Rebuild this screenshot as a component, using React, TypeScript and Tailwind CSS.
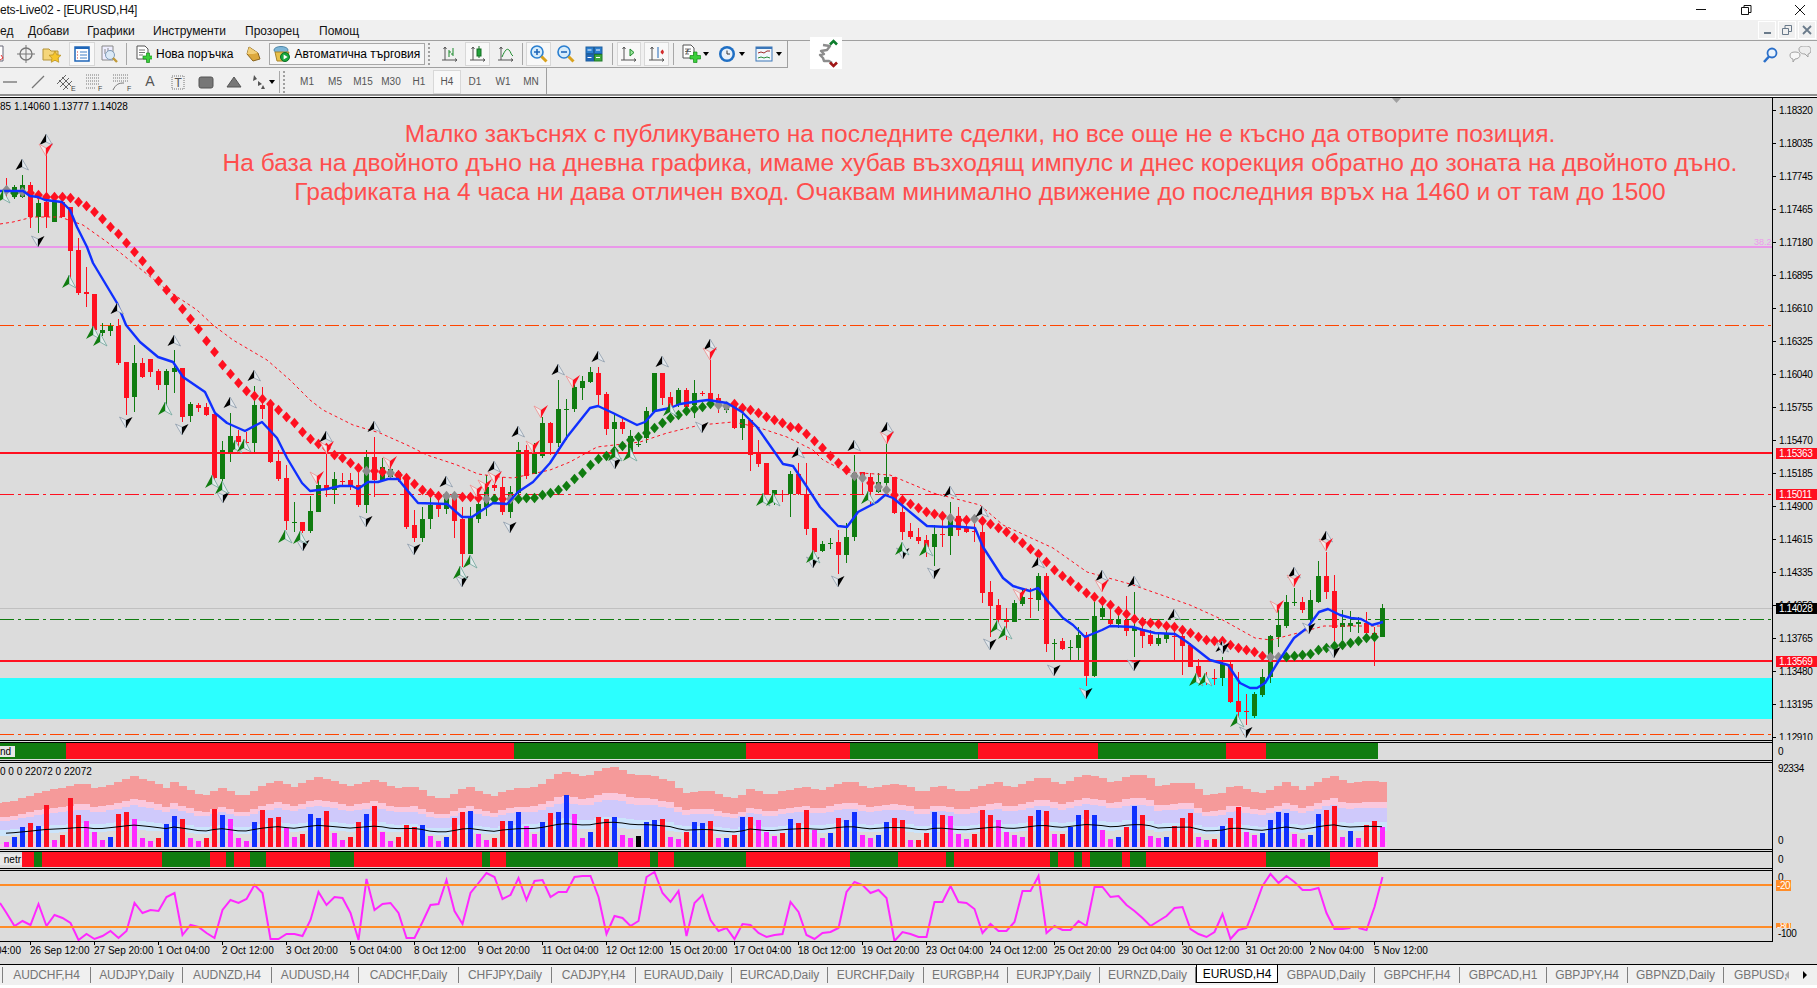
import type { ReactNode } from "react";

const r = 0;
const g = 1;
// top of body, bottom of body, high, low, direction - all in page pixels
const CANDLES: number[][] = [
  [188,192,178,198,r],[187,197,185,199,g],[185,197,175,198,g],[185,217,182,228,r],[203,217,200,233,g],
  [202,217,155,228,r],[202,222,197,222,g],[202,217,197,217,r],[207,251,207,282,r],[250,293,238,295,r],
  [292,294,267,307,r],[294,330,294,335,r],[330,333,323,336,g],[326,331,323,336,g],[326,363,319,365,r],
  [362,398,362,415,r],[363,397,345,412,g],[363,377,358,378,r],[359,372,359,377,r],[371,385,369,390,r],
  [371,385,369,407,g],[368,372,350,393,g],[368,417,368,422,r],[404,416,402,422,g],[405,408,403,412,r],
  [407,415,403,416,r],[414,478,414,480,r],[450,479,441,483,g],[436,452,413,462,g],[436,442,430,450,r],
  [442,443,432,450,r],[405,443,386,452,g],[405,409,387,419,r],[403,462,403,463,r],[461,479,450,481,r],
  [478,521,465,530,r],[522,522,502,532,g],[522,531,522,533,r],[511,531,496,533,g],[485,512,475,512,g],
  [485,490,445,497,r],[479,490,472,504,g],[481,481,473,485,r],[480,487,473,490,r],[485,505,473,507,r],
  [457,505,450,513,g],[457,480,437,497,r],[467,480,458,480,g],[469,477,462,480,g],[472,480,470,482,r],
  [480,527,478,529,r],[525,538,510,542,r],[519,538,507,542,g],[505,519,493,529,g],[505,509,493,517,r],
  [497,509,492,514,g],[498,521,495,538,r],[519,554,507,567,r],[517,554,507,554,g],[504,519,494,523,g],
  [487,507,475,516,g],[485,488,475,491,r],[487,512,477,515,r],[492,512,486,518,g],[450,493,442,503,g],
  [450,476,445,479,r],[453,474,443,474,g],[423,456,417,458,g],[423,443,422,455,r],[409,443,380,447,g],
  [409,409,399,440,g],[387,409,380,412,g],[381,388,376,400,g],[372,382,367,383,g],[373,395,367,405,r],
  [394,429,392,435,r],[422,429,413,455,g],[422,429,419,434,r],[436,452,430,452,g],[444,444,437,447,g],
  [411,438,407,443,g],[373,412,373,413,g],[373,398,373,405,r],[397,407,392,410,r],[390,405,388,407,g],
  [390,407,388,412,r],[393,405,380,418,g],[393,393,391,396,r],[393,400,360,401,r],[398,405,394,413,r],
  [405,410,402,413,g],[402,428,402,429,r],[419,428,414,440,g],[420,455,420,471,r],[453,464,440,467,r],
  [463,495,463,495,r],[490,495,490,505,g],[494,494,490,502,r],[474,494,471,517,g],[474,494,463,495,r],
  [494,529,463,535,r],[528,552,528,556,r],[544,551,541,552,g],[543,543,538,549,g],[542,555,530,574,r],
  [537,555,523,563,g],[473,537,455,541,g],[472,477,472,495,r],[477,492,473,505,r],[482,492,473,493,g],
  [477,483,440,493,g],[477,513,477,514,r],[512,532,500,540,r],[531,537,523,539,r],[537,541,528,544,r],
  [540,547,535,557,r],[534,547,525,566,g],[534,534,518,547,r],[518,536,502,555,g],[516,530,507,536,r],
  [528,532,517,533,r],[531,531,517,542,r],[532,593,518,603,r],[592,606,581,637,r],[605,620,599,630,r],
  [620,622,608,640,r],[603,622,600,622,g],[597,604,590,606,g],[598,598,588,618,r],[576,600,573,611,g],
  [576,644,573,652,r],[643,643,639,662,g],[641,649,638,650,r],[647,647,640,660,g],[635,648,627,660,g],
  [635,676,632,686,r],[616,676,602,677,g],[608,617,597,620,g],[620,624,610,625,r],[619,624,615,628,g],
  [620,631,596,636,r],[627,631,592,657,g],[630,636,623,648,r],[635,644,630,646,r],[638,644,633,646,g],
  [634,639,630,643,g],[636,636,623,660,r],[636,646,627,675,r],[645,667,643,667,r],[666,677,659,683,r],
  [680,680,672,685,r],[678,678,669,685,r],[664,678,657,686,g],[664,702,660,703,r],[701,712,672,720,r],
  [711,711,694,725,r],[694,716,692,718,g],[677,695,669,697,g],[636,677,635,683,g],[625,637,610,647,g],
  [602,626,595,628,g],[602,602,588,606,g],[602,610,597,613,r],[600,619,590,622,g],[576,602,561,603,g],
  [576,592,552,599,r],[591,628,575,643,r],[623,627,610,640,g],[623,626,611,632,g],[622,624,617,633,g],
  [623,633,612,637,r],[633,637,627,666,r],[608,637,604,637,g],
];

const DIAMONDS = [190,193,192,193,195,197,197,197,198,202,206,212,219,227,234,243,252,261,271,281,290,299,309,319,329,341,352,365,374,383,391,396,399,404,410,417,423,432,439,444,448,455,458,463,468,471,471,472,473,475,478,484,490,493,496,496,496,497,497,498,499,499,499,499,499,498,498,495,493,490,486,479,473,465,459,456,451,446,440,437,433,428,423,418,415,411,409,407,404,405,406,404,408,410,413,417,420,423,427,428,434,441,448,456,463,470,476,478,483,487,490,495,500,504,508,512,514,516,518,520,520,519,521,524,528,532,538,543,549,554,562,570,576,581,587,593,597,601,605,611,614,619,622,623,624,626,627,630,633,637,640,641,641,645,648,650,652,656,657,657,657,656,655,654,650,648,646,645,643,641,638,637];
const GREY = [0,2,45,48,55,56,60,63,89,90,106,107,109,110,118,121,158,159];

const BLUE = "0,191 23,191 30,196 38,197 45,200 62,202 70,210 77,227 87,247 93,263 105,283 117,303 126,325 140,342 158,357 173,362 183,377 205,392 215,413 227,423 245,431 262,422 277,438 287,458 302,483 310,491 327,489 340,486 352,486 358,489 368,482 378,482 388,479 398,479 407,490 418,503 447,504 462,517 472,517 493,503 507,504 518,492 533,482 550,463 567,437 590,408 598,406 613,413 637,425 645,422 655,411 670,408 680,404 700,401 708,400 727,403 742,412 757,427 783,464 793,466 807,487 820,507 838,526 847,527 858,512 877,502 885,495 893,498 927,526 947,527 950,526 975,528 983,547 1003,578 1013,586 1030,591 1038,588 1047,600 1063,618 1073,625 1085,637 1102,630 1110,626 1133,627 1143,630 1155,633 1175,634 1187,642 1210,660 1228,665 1240,683 1250,688 1257,688 1265,683 1278,662 1294,638 1307,628 1319,612 1328,609 1340,615 1351,618 1361,619 1372,625 1383,622";
const RED_MA = "0,224 13,222 33,217 60,217 83,225 107,242 133,263 167,290 197,310 213,325 233,340 267,360 290,380 310,400 323,410 353,425 380,433 407,445 427,455 457,465 478,474 500,477 513,478 550,470 570,462 597,447 640,442 667,433 700,425 733,422 757,427 787,437 813,450 823,460 847,472 890,475 933,493 980,505 1003,525 1053,548 1087,572 1130,584 1190,605 1221,619 1255,638 1271,640 1294,634 1324,626 1382,626";

const ARROW_UP: number[][] = [[22,165],[46,140],[117,309],[174,341],[254,376],[230,403],[326,437],[374,427],[446,482],[494,467],[518,432],[558,370],[598,357],[662,362],[710,345],[798,453],[854,446],[887,428],[950,492],[982,512],[1038,563],[1102,576],[1134,582],[1174,615],[1222,647],[1326,537],[1294,573]];
const ARROW_DOWN: number[][] = [[38,241],[126,422],[182,429],[223,497],[303,545],[366,521],[414,549],[462,581],[510,527],[615,463],[702,427],[813,562],[838,581],[903,553],[934,573],[990,644],[1054,670],[1086,693],[1134,665],[1246,732],[1309,628],[1334,652],[1223,648]];
const ARROW_RED: number[][] = [[46,149],[327,447],[317,477],[390,462],[477,490],[485,485],[495,477],[533,446],[541,411],[573,381],[710,353],[887,437],[1020,594],[1102,585],[1326,544],[1294,580],[1277,606]];
const ARROW_GREEN: number[][] = [[3,197],[69,282],[93,333],[100,340],[165,409],[212,482],[222,488],[235,447],[244,446],[285,537],[300,538],[460,573],[470,562],[615,455],[630,455],[670,410],[763,500],[773,500],[868,498],[813,557],[902,549],[926,550],[997,627],[1005,633],[1196,680],[1205,680],[1237,721]];

const RED = "#ff1020";
const GREEN = "#107c10";
const BLUE_C = "#1030ff";
const PINK = "#ff28ff";

const VOL_TOPS: number[][] = [[0,803],[10,802],[33,795],[43,791],[67,787],[83,783],[97,789],[115,783],[133,776],[147,780],[167,788],[173,782],[193,791],[203,797],[220,787],[243,797],[260,787],[277,781],[293,787],[317,777],[333,781],[350,786],[377,779],[393,788],[417,787],[433,798],[447,798],[467,786],[493,797],[500,793],[517,788],[537,787],[553,777],[563,771],[587,777],[603,768],[617,767],[633,775],[650,775],[673,782],[682,793],[707,790],[727,797],[737,799],[750,789],[770,795],[787,790],[807,787],[820,791],[843,782],[857,782],[867,789],[890,784],[907,785],[923,793],[937,785],[963,792],[980,787],[997,782],[1010,788],[1027,783],[1035,778],[1050,778],[1058,785],[1077,778],[1083,774],[1100,777],[1113,783],[1130,775],[1147,775],[1157,786],[1177,783],[1193,783],[1203,795],[1220,794],[1233,785],[1250,790],[1260,794],[1287,782],[1303,790],[1323,779],[1333,775],[1347,783],[1370,780],[1386,782]];

const p = PINK, e = RED, b = BLUE_C, k = "#000000";
const VOLUME: [string, number][] = [
  [p,842],[b,837],[b,827],[e,823],[b,826],[e,805],[p,840],[e,835],[e,798],[e,815],[p,821],[p,832],[p,840],[b,837],[e,814],[e,812],[p,819],[p,838],[p,841],[e,838],
  [b,824],[b,816],[e,819],[p,838],[p,841],[e,838],[e,809],[b,815],[p,819],[p,838],[p,841],[b,822],[e,810],[e,818],[e,817],[p,828],[p,837],[e,834],[b,814],[b,818],
  [e,811],[p,833],[p,840],[e,837],[e,822],[b,814],[e,806],[p,832],[p,841],[e,837],[e,825],[e,827],[b,825],[p,836],[p,841],[b,837],[e,818],[e,812],[b,811],[p,834],
  [p,840],[e,838],[e,821],[b,821],[b,812],[p,826],[p,834],[b,822],[e,813],[b,812],[b,795],[p,814],[p,838],[b,832],[e,817],[e,819],[b,817],[p,835],[p,838],[k,836],
  [b,822],[b,820],[e,819],[p,837],[p,839],[e,832],[b,822],[b,823],[e,821],[p,838],[b,838],[e,835],[b,817],[e,817],[p,820],[p,832],[p,836],[e,833],[b,819],[e,823],
  [e,810],[p,830],[p,838],[b,833],[e,818],[b,820],[b,812],[p,835],[p,838],[b,835],[b,822],[e,818],[e,820],[p,840],[e,840],[e,833],[b,812],[e,815],[p,816],[p,834],
  [p,839],[e,834],[e,810],[e,815],[p,820],[p,832],[p,835],[p,837],[e,816],[b,810],[e,811],[p,834],[e,834],[b,827],[b,815],[e,810],[b,815],[p,830],[p,839],[b,837],
  [e,827],[b,806],[e,815],[p,836],[p,838],[b,837],[e,826],[e,818],[e,813],[p,837],[p,840],[e,839],[b,826],[e,818],[e,807],[p,832],[p,835],[b,833],[b,820],[b,812],
  [b,813],[p,834],[p,839],[b,835],[b,814],[e,810],[e,806],[p,837],[b,831],[p,838],[e,825],[e,821],[p,827],
];

const WPR = [913,926,921,925,904,926,915,918,923,940,934,939,936,931,938,931,903,913,910,911,897,893,935,925,927,933,938,910,900,903,899,885,893,939,939,934,934,936,920,892,905,897,898,913,940,879,910,904,903,913,938,938,922,905,904,880,911,924,893,883,873,877,
  899,895,878,900,881,880,897,892,892,877,876,876,897,934,916,918,926,921,877,872,893,902,891,936,903,895,920,931,928,939,924,925,933,937,935,934,902,912,935,939,933,932,928,892,882,885,893,890,898,941,932,934,937,937,902,902,886,902,903,909,933,924,931,
  931,922,891,891,876,933,926,930,930,921,926,887,887,897,896,905,911,918,926,921,916,908,907,929,934,937,932,914,939,930,928,908,886,874,883,876,882,890,890,888,913,929,929,928,928,930,907,877];

const BAND_1: [number, number, string][] = [[-1,66,GREEN],[66,514,RED],[514,746,GREEN],[746,850,RED],[850,978,GREEN],[978,1098,RED],[1098,1226,GREEN],[1226,1266,RED],[1266,1378,GREEN]];
const BAND_2: [number, number, string][] = [[22,34,RED],[34,42,GREEN],[42,162,RED],[162,210,GREEN],[210,226,RED],[226,234,GREEN],[234,250,RED],[250,266,GREEN],[266,330,RED],[330,354,GREEN],[354,482,RED],[482,490,GREEN],[490,506,RED],[506,618,GREEN],[618,650,RED],[650,658,GREEN],[658,674,RED],[674,746,GREEN],[746,850,RED],[850,898,GREEN],[898,946,RED],[946,954,GREEN],[954,1050,RED],[1050,1058,GREEN],[1058,1074,RED],[1074,1082,GREEN],[1082,1090,RED],[1090,1122,GREEN],[1122,1130,RED],[1130,1146,GREEN],[1146,1266,RED],[1266,1330,GREEN],[1330,1378,RED]];

const PRICES = ["1.18320","1.18035","1.17745","1.17465","1.17180","1.16895","1.16610","1.16325","1.16040","1.15755","1.15470","1.15185","1.14900","1.14615","1.14335","1.14050","1.13765","1.13480","1.13195","1.12910"];
const DATES = ["26 Sep 12:00","27 Sep 20:00","1 Oct 04:00","2 Oct 12:00","3 Oct 20:00","5 Oct 04:00","8 Oct 12:00","9 Oct 20:00","11 Oct 04:00","12 Oct 12:00","15 Oct 20:00","17 Oct 04:00","18 Oct 12:00","19 Oct 20:00","23 Oct 04:00","24 Oct 12:00","25 Oct 20:00","29 Oct 04:00","30 Oct 12:00","31 Oct 20:00","2 Nov 04:00","5 Nov 12:00"];

function volTop(x: number) {
  for (let n = 1; n < VOL_TOPS.length; n++) {
    const [x0, y0] = VOL_TOPS[n - 1];
    const [x1, y1] = VOL_TOPS[n];
    if (x <= x1) return y0 + ((y1 - y0) * (x - x0)) / (x1 - x0);
  }
  return 782;
}

function MainChart() {
  return (
    <svg width="1772" height="642" viewBox="0 98 1772 642" className="block">
      <rect x="0" y="678" width="1772" height="41" fill="#2bffff" />
      <line x1="0" x2="1772" y1="608.5" y2="608.5" stroke="#c0c0c0" />
      <line x1="0" x2="1772" y1="247" y2="247" stroke="#ee82ee" strokeWidth="1.5" />
      <line x1="0" x2="1772" y1="325.5" y2="325.5" stroke="#ff4500" strokeDasharray="14 4 3 4" />
      <line x1="0" x2="1772" y1="734.5" y2="734.5" stroke="#ff4500" strokeDasharray="14 4 3 4" />
      <line x1="0" x2="1772" y1="619.5" y2="619.5" stroke={GREEN} strokeDasharray="14 4 3 4" />
      {CANDLES.map(([top, bot, hi, lo, dir], i) => {
        const c = dir === g ? GREEN : RED;
        return (
          <g key={i} fill={c} shapeRendering="crispEdges">
            <rect x={8 * i + 6} y={hi} width="1" height={lo - hi} />
            <rect x={8 * i + 4} y={top} width="5" height={Math.max(bot - top, 1)} />
          </g>
        );
      })}
      <line x1="0" x2="1772" y1="453" y2="453" stroke={RED} strokeWidth="2" />
      <line x1="0" x2="1772" y1="494.5" y2="494.5" stroke={RED} strokeDasharray="14 4 3 4" />
      <line x1="0" x2="1772" y1="661" y2="661" stroke={RED} strokeWidth="2" />
      <polyline points={RED_MA} fill="none" stroke={RED} strokeWidth="1" strokeDasharray="3 3" />
      {DIAMONDS.map((y, i) => {
        const x = 8 * i + 6.5;
        const green = i === 1 || i === 61 || (i >= 64 && i <= 88) || i >= 160;
        const fill = GREY.includes(i) ? "#8c8c8c" : green ? GREEN : RED;
        return <path key={i} d={`M${x} ${y - 5.2}L${x + 4.4} ${y}L${x} ${y + 5.2}L${x - 4.4} ${y}Z`} fill={fill} />;
      })}
      <polyline points={BLUE} fill="none" stroke={BLUE_C} strokeWidth="2.4" strokeLinejoin="round" />
      {ARROW_UP.map(([x, y], i) => (
        <g key={i} transform={`translate(${x} ${y})`}>
          <path d="M0 -6L6.5 5L0 2Z" fill="#e4e8ec" stroke="#8d9cab" strokeWidth="0.8" />
          <path d="M0 -6L-6.5 5L0 2Z" fill="#000" />
        </g>
      ))}
      {ARROW_DOWN.map(([x, y], i) => (
        <g key={i} transform={`translate(${x} ${y})`}>
          <path d="M0 6L-6.5 -5L0 -2Z" fill="#e4e8ec" stroke="#8d9cab" strokeWidth="0.8" />
          <path d="M0 6L6.5 -5L0 -2Z" fill="#000" />
        </g>
      ))}
      {ARROW_RED.map(([x, y], i) => (
        <g key={i} transform={`translate(${x} ${y})`}>
          <path d="M0 7L-7 -5L0 -1Z" fill="#eee" stroke="#f08a8a" strokeWidth="0.8" />
          <path d="M0 7L7 -6L0 -1Z" fill={RED} />
        </g>
      ))}
      {ARROW_GREEN.map(([x, y], i) => (
        <g key={i} transform={`translate(${x} ${y})`}>
          <path d="M0 -7L7 6L0 2Z" fill="#e4ecec" stroke="#6fa59a" strokeWidth="0.8" />
          <path d="M0 -7L-7 6L0 2Z" fill={GREEN} />
        </g>
      ))}
      <path d="M1392 98h9l-4.5 5z" fill="#a0a0a0" />
    </svg>
  );
}

function VolumePanel() {
  const bins = Array.from({ length: 174 }, (_, n) => n - 1);
  return (
    <svg width="1772" height="86" viewBox="0 763 1772 86" className="block" shapeRendering="crispEdges">
      {bins.map((i) => {
        const x = 8 * i + 2;
        const h = 847 - volTop(Math.max(8 * i + 6, 0));
        const seg = (a: number, c: number, fill: string) => (
          <rect x={x} y={847 - a * h} width="8.5" height={(a - c) * h} fill={fill} />
        );
        return (
          <g key={i}>
            {seg(1, 0.68, "#f59a9a")}
            {seg(0.68, 0.59, "#fbc8dc")}
            {seg(0.59, 0.38, "#cfc9fb")}
            {seg(0.38, 0.25, "#cbe4fb")}
            {seg(0.07, 0, "#f6c9ee")}
          </g>
        );
      })}
      {VOLUME.map(([c, y], i) => (
        <rect key={i} x={8 * i + 4} y={y} width="5" height={847 - y} fill={c} />
      ))}
      <polyline
        shapeRendering="auto"
        points={bins.slice(1).map((i) => `${8 * i + 6},${847 - 0.31 * (847 - volTop(8 * i + 6))}`).join(" ")}
        fill="none"
        stroke="#000"
      />
    </svg>
  );
}

function Band({ items, height }: { items: [number, number, string][]; height: number }) {
  return (
    <svg width="1772" height={height} className="block" shapeRendering="crispEdges">
      {items.map(([a, z, c]) => (
        <rect key={a} x={a} y="0" width={z - a} height={height - 1} fill={c} />
      ))}
    </svg>
  );
}

function WprPanel() {
  const pts = (from: number, to: number) =>
    WPR.slice(from, to).map((y, i) => `${8 * (i + from) + 6.5},${y}`).join(" ");
  return (
    <svg width="1772" height="70" viewBox="0 871 1772 70" className="block">
      <polyline points={`0,903 ${pts(0, 169)}`} fill="none" stroke={PINK} strokeWidth="2" />
      <polyline points={pts(169, 173)} fill="none" stroke={PINK} strokeWidth="2" />
      <line x1="0" x2="1772" y1="885" y2="885" stroke="#ff8c28" strokeWidth="2" />
      <line x1="0" x2="1772" y1="927" y2="927" stroke="#ff8c28" strokeWidth="2" />
    </svg>
  );
}

function Sep() {
  return <div className="h-[3px] border-y border-black bg-[#dcdcdc]" />;
}

function Logo() {
  return (
    <svg width="32" height="32" viewBox="0 0 32 32" className="absolute left-[810px] top-[37px] z-10 bg-white">
      <path d="M13 8l7 1-3 4-6 1 3 3-4 1 3 3 1 3h5l3 2" fill="none" stroke="#8c8c8c" strokeWidth="2.4" strokeLinejoin="round" />
      <path d="M20 7.5L23.5 4 27 7.5" fill="none" stroke="#0e7d2c" strokeWidth="2.6" />
      <path d="M20 25.5L23.5 29 27 25.5" fill="none" stroke="#a01616" strokeWidth="2.6" />
    </svg>
  );
}

function Svg({ children, w = 20 }: { children: ReactNode; w?: number }) {
  return (
    <svg width={w} height="20" viewBox={`0 0 ${w} 20`} className="shrink-0">
      {children}
    </svg>
  );
}

function Doc() {
  return (
    <>
      <path d="M3 2h8l3 3v10H3z" fill="#fff" stroke="#555" />
      <path d="M5 6h6M5 8.5h6M5 11h4" stroke="#777" />
    </>
  );
}

const Plus = () => <path d="M12.5 9h3v3h3.5v3h-3.5v3.5h-3V15H9v-3h3.5z" fill="#3bcf3b" stroke="#15891a" strokeWidth="0.7" />;

const Glass = ({ inner }: { inner: ReactNode }) => (
  <>
    <circle cx="8" cy="8" r="6" fill="#d6ecfb" stroke="#2a7fd0" strokeWidth="1.6" />
    {inner}
    <path d="M12.5 12.5l5 5" stroke="#d9a21e" strokeWidth="3" />
  </>
);

const AxisIcon = ({ children }: { children?: ReactNode }) => (
  <>
    <path d="M5 3v13M2 16h15M5 3l-1.5 2M5 3l1.5 2M17 16l-2-1.5M17 16l-2 1.5" stroke="#555" fill="none" />
    {children}
  </>
);

function Toolbar1() {
  const box = "flex items-center justify-center h-[24px] border border-[#d8d8d8] bg-[#f8f8f8] shrink-0";
  const btn = "flex items-center justify-center h-[24px] shrink-0";
  const sep = "w-px h-[22px] bg-[#a8a8a8] shrink-0";
  return (
    <div className="h-[27px] flex bg-[#f0f0f0]">
      <div className="w-[788px] shrink-0 flex items-center border-r border-b border-[#a0a0a0] overflow-hidden">
        <div className="w-[13px] h-[24px] overflow-hidden flex justify-start items-center shrink-0">
          <svg width="5" height="20" viewBox="12 0 5 20"><path d="M3 2h12v15H3z" fill="#fff" stroke="#667" /><path d="M13 11l2 3-3 2" stroke="#e33" fill="none" /></svg>
        </div>
        <div className={`${btn} w-[25px]`}>
          <Svg><circle cx="10" cy="10" r="6" fill="none" stroke="#777" strokeWidth="1.3" /><path d="M10 1v18M1 10h18" stroke="#777" /></Svg>
        </div>
        <div className={`${btn} w-[28px]`}>
          <Svg>
            <path d="M1 5h6l2 2h7v9H1z" fill="#f5d67a" stroke="#b49338" />
            <path d="M13 7l1.8 3.8 4.2.5-3 2.9.8 4.1-3.8-2-3.8 2 .8-4.1-3-2.9 4.2-.5z" fill="#f6c52c" stroke="#b48c1c" strokeWidth="0.7" />
          </Svg>
        </div>
        <div className={`${box} w-[26px] ml-[3px]`}>
          <Svg>
            <rect x="3" y="3" width="14" height="14" fill="#fff" stroke="#1f66b8" strokeWidth="1.5" />
            <path d="M3 4h14" stroke="#1f66b8" strokeWidth="2" />
            <path d="M8 8h7M8 11h7M8 14h7" stroke="#3c7fc6" />
            <path d="M5 8h1M5 11h1M5 14h1" stroke="#d13a3a" />
          </Svg>
        </div>
        <div className={`${btn} w-[24px] ml-[2px]`}>
          <Svg>
            <path d="M3 2h11v14H3z" fill="#eef" stroke="#888" />
            <path d="M6 5v5M9 4v4M12 6v4" stroke="#888" />
            <circle cx="11" cy="11" r="4.5" fill="#dbe9f6" stroke="#7f9bb8" />
            <path d="M14 14l4 4" stroke="#c09a3a" strokeWidth="2.4" />
          </Svg>
        </div>
        <div className={`${sep} ml-[5px]`} />
        <div className="flex items-center ml-[9px] gap-[4px] shrink-0">
          <Svg w={16}><g transform="translate(-2 0)"><Doc /><Plus /></g></Svg>
          <span className="text-[12px] leading-none text-black whitespace-nowrap">Нова поръчка</span>
        </div>
        <div className={`${btn} w-[18px] ml-[11px]`}>
          <Svg w={18}>
            <path d="M5 3l9 6 2 6-7 2-6-7z" fill="#dca83c" stroke="#8a6520" />
            <path d="M5 3l9 6-5 1-6 0z" fill="#f2cf78" />
          </Svg>
        </div>
        <div className="flex items-center w-[156px] h-[22px] ml-[7px] pl-[3px] gap-[3px] border border-[#a8a8a8] bg-[#f6f6f6] shrink-0">
          <Svg w={18}>
            <ellipse cx="8" cy="6" rx="7" ry="3.5" fill="#7db6d8" stroke="#4d86a8" />
            <path d="M2 8l2 9h9l3-9z" fill="#e9c24c" stroke="#a8842a" />
            <circle cx="12" cy="13" r="4.5" fill="#18a83e" stroke="#0c6e28" />
            <path d="M10.6 10.5l4 2.5-4 2.5z" fill="#fff" />
          </Svg>
          <span className="text-[12px] leading-none text-black whitespace-nowrap">Автоматична търговия</span>
        </div>
        <div className="w-[3px] h-[22px] ml-[3px] border-l-2 border-dotted border-[#a0a0a0] shrink-0" />
        <div className={`${btn} w-[24px] ml-[7px]`}>
          <Svg><AxisIcon><path d="M9 6v7M9 8h2M13 4v8M11 10h2" stroke="#1a8a2a" /></AxisIcon></Svg>
        </div>
        <div className={`${box} w-[25px] ml-[3px]`}>
          <Svg><AxisIcon><rect x="9" y="5" width="4" height="7" fill="#22a33a" stroke="#126d22" /><path d="M11 2v3M11 12v2" stroke="#126d22" /></AxisIcon></Svg>
        </div>
        <div className={`${btn} w-[24px] ml-[4px]`}>
          <Svg><AxisIcon><path d="M6 13c3-7 5-9 7-7s2 5 4 6" fill="none" stroke="#1a8a2a" /></AxisIcon></Svg>
        </div>
        <div className={`${sep} ml-[4px]`} />
        <div className={`${box} w-[25px] ml-[3px]`}>
          <Svg><Glass inner={<path d="M5 8h6M8 5v6" stroke="#1f66b8" strokeWidth="1.6" />} /></Svg>
        </div>
        <div className={`${btn} w-[24px] ml-[3px]`}>
          <Svg><Glass inner={<path d="M5 8h6" stroke="#1f66b8" strokeWidth="1.6" />} /></Svg>
        </div>
        <div className={`${btn} w-[24px] ml-[4px]`}>
          <Svg>
            <rect x="2" y="3" width="7.5" height="6.5" fill="#2a7fd0" stroke="#1f5f9e" />
            <rect x="10.5" y="3" width="7.5" height="6.5" fill="#2a7fd0" stroke="#1f5f9e" />
            <rect x="2" y="10.5" width="7.5" height="6.5" fill="#1f66b8" stroke="#1f5f9e" />
            <rect x="10.5" y="10.5" width="7.5" height="6.5" fill="#41a83e" stroke="#1f7a2a" />
            <path d="M3.5 6h4M12 6h4M3.5 13.5h4M12 13.5h4" stroke="#fff" />
          </Svg>
        </div>
        <div className={`${sep} ml-[6px]`} />
        <div className={`${box} w-[24px] ml-[4px]`}>
          <Svg><AxisIcon><path d="M11 5v7l4-3.5z" fill="#9be59b" stroke="#1a8a2a" /></AxisIcon></Svg>
        </div>
        <div className={`${box} w-[25px] ml-[3px]`}>
          <Svg><AxisIcon><path d="M11 3v11" stroke="#1f66b8" /><path d="M17 8h-3M14 8l2-2M14 8l2 2" stroke="#d12a2a" strokeWidth="1.4" /></AxisIcon></Svg>
        </div>
        <div className={`${sep} ml-[4px]`} />
        <div className={`${btn} w-[22px] ml-[6px]`}>
          <Svg><g transform="translate(-1 -1)"><Doc /><text x="6" y="11" fontSize="8" fontStyle="italic" fill="#333">f</text><path d="M13.5 9h3.5v3.5h3.5v3.5H17v3.5h-3.5V16H10v-3.5h3.5z" fill="#3bcf3b" stroke="#15891a" strokeWidth="0.7" /></g></Svg>
        </div>
        <Caret />
        <div className={`${btn} w-[22px] ml-[6px]`}>
          <Svg>
            <circle cx="10" cy="10" r="8" fill="#1f6fc4" />
            <circle cx="10" cy="10" r="5.5" fill="#e8f1fa" />
            <path d="M10 6.5V10h3" stroke="#333" fill="none" />
          </Svg>
        </div>
        <Caret />
        <div className={`${btn} w-[22px] ml-[7px]`}>
          <Svg>
            <rect x="2" y="3" width="16" height="14" fill="#f2f6fb" stroke="#3a76b8" />
            <path d="M2 4h16" stroke="#3a76b8" strokeWidth="2" />
            <path d="M4 9l3-1 3 1 3-2 3 0" stroke="#a02a2a" fill="none" />
            <path d="M4 14l3-1 3 1 3-1 3 1" stroke="#2a8a3a" fill="none" />
          </Svg>
        </div>
        <Caret />
      </div>
      <div className="flex-1 flex items-center justify-end pr-[6px] gap-[10px]">
        <svg width="18" height="18" viewBox="0 0 18 18">
          <circle cx="11" cy="7" r="4.5" fill="#eaf3fc" stroke="#2a6fc9" strokeWidth="1.8" />
          <path d="M8 10.5L3 16" stroke="#2a6fc9" strokeWidth="2.6" />
        </svg>
        <svg width="22" height="18" viewBox="0 0 22 18">
          <path d="M10 3c0-2 2-3 6-3s6 1 6 4-2 4-3 4v3l-3-3c-4 0-6-2-6-5z" fill="#ededed" stroke="#a0a0a0" />
          <path d="M1 9c0-2 2-3 5-3s5 1 5 3-2 4-5 4l-2 3v-3c-2 0-3-2-3-4z" fill="#f7f7f7" stroke="#a0a0a0" />
        </svg>
      </div>
    </div>
  );
}

function Caret() {
  return (
    <div className="w-[8px] flex items-center justify-center shrink-0">
      <div className="w-0 h-0 border-x-[3.5px] border-x-transparent border-t-[4px] border-t-black" />
    </div>
  );
}

function Toolbar2() {
  const slot = "flex items-center justify-center h-[24px] w-[28px] shrink-0";
  const tf = "flex items-center justify-center h-[24px] w-[28px] text-[10px] text-[#555] shrink-0";
  return (
    <div className="h-[26px] flex bg-[#f0f0f0]">
      <div className="w-[547px] shrink-0 flex items-center pt-[1px] border-r border-[#a0a0a0] overflow-hidden">
        <div className="-ml-[4px] flex">
          <div className={slot}><Svg><path d="M3 10h14" stroke="#666" strokeWidth="1.2" /></Svg></div>
          <div className={slot}><Svg><path d="M4 16L16 4" stroke="#777" strokeWidth="1.2" /></Svg></div>
          <div className={slot}>
            <Svg w={24}><path d="M3 12L12 3M6 15L15 6M9 18L18 9M5 8l9 9M8 5l9 9" stroke="#666" fill="none" /><text x="17" y="19" fontSize="7" fill="#444">E</text></Svg>
          </div>
          <div className={slot}>
            <Svg w={24}><path d="M4 3h14M4 6h14M4 9h14M4 12h14M4 16h10" stroke="#777" strokeDasharray="1 1" /><text x="16" y="19" fontSize="7" fill="#444">F</text></Svg>
          </div>
          <div className={slot}>
            <Svg w={24}><path d="M3 3h15M3 6h15M3 9h15" stroke="#777" strokeDasharray="1 1" /><path d="M3 18c3-6 6-7 11-7" stroke="#777" fill="none" /><text x="17" y="19" fontSize="7" fill="#444">F</text></Svg>
          </div>
          <div className={`${slot} text-[14px] text-[#555]`}>A</div>
          <div className={slot}>
            <Svg><rect x="4" y="4" width="12" height="13" fill="none" stroke="#777" strokeDasharray="1 1" /><text x="6.5" y="15" fontSize="12" fill="#555">T</text></Svg>
          </div>
          <div className={slot}><Svg><rect x="3" y="5" width="14" height="11" rx="2" fill="#777" stroke="#555" /></Svg></div>
          <div className={slot}><Svg><path d="M10 5l7 10H3z" fill="#777" stroke="#555" /></Svg></div>
          <div className={slot}>
            <Svg><path d="M6 3l3 4-4 2zM10 9l4 3-4 2zM15 13l2 4-4 0z" fill="#555" /></Svg>
            <Caret />
          </div>
        </div>
        <div className="w-px h-[22px] bg-[#a8a8a8] ml-[3px] shrink-0" />
        <div className="w-[3px] h-[22px] ml-[3px] border-l-2 border-dotted border-[#a0a0a0] shrink-0" />
        <div className="flex ml-[7px]">
          {["M1", "M5", "M15", "M30", "H1"].map((t) => (
            <div key={t} className={tf}>{t}</div>
          ))}
          <div className={`${tf} border border-[#d8d8d8] bg-[#f8f8f8]`}>H4</div>
          {["D1", "W1", "MN"].map((t) => (
            <div key={t} className={tf}>{t}</div>
          ))}
        </div>
      </div>
      <div className="flex-1" />
    </div>
  );
}

const TABS = [
  ["", "w-[3px]"],
  ["AUDCHF,H4", "w-[88px]"],
  ["AUDJPY,Daily", "w-[92px]"],
  ["AUDNZD,H4", "w-[89px]"],
  ["AUDUSD,H4", "w-[87px]"],
  ["CADCHF,Daily", "w-[100px]"],
  ["CHFJPY,Daily", "w-[93px]"],
  ["CADJPY,H4", "w-[84px]"],
  ["EURAUD,Daily", "w-[96px]"],
  ["EURCAD,Daily", "w-[96px]"],
  ["EURCHF,Daily", "w-[96px]"],
  ["EURGBP,H4", "w-[84px]"],
  ["EURJPY,Daily", "w-[92px]"],
  ["EURNZD,Daily", "w-[96px]"],
];
const TABS_AFTER = [
  ["GBPAUD,Daily", "w-[97px]"],
  ["GBPCHF,H4", "w-[85px]"],
  ["GBPCAD,H1", "w-[87px]"],
  ["GBPJPY,H4", "w-[81px]"],
  ["GBPNZD,Daily", "w-[96px]"],
];

function Tabs() {
  const tab = "h-[16px] shrink-0 flex items-center justify-center border-r border-[#808080] text-[12px] text-[#757575] tracking-[-0.1px] whitespace-nowrap";
  return (
    <div className="h-[21px] flex items-start bg-[#f0f0f0] border-t border-black overflow-hidden">
      <div className="flex items-center pt-[2px]">
        {TABS.map(([t, w]) => (
          <div key={t} className={`${tab} ${w}`}>{t}</div>
        ))}
      </div>
      <div className="w-[82px] h-[18px] shrink-0 bg-white border-r border-b border-l border-black flex items-center justify-center text-[12px] text-black tracking-[-0.1px]">
        EURUSD,H4
      </div>
      <div className="flex items-center pt-[2px]">
        {TABS_AFTER.map(([t, w]) => (
          <div key={t} className={`${tab} ${w}`}>{t}</div>
        ))}
      </div>
      <div className="flex items-center pt-[2px] h-[18px] text-[12px] text-[#757575]">
        <span className="w-[56px] pl-[10px] whitespace-nowrap tracking-[-0.1px]">GBPUSD,</span>
        <div className="ml-[5px] w-0 h-0 border-y-[4px] border-y-transparent border-r-[4px] border-r-[#a8a8a8]" />
        <div className="ml-[14px] w-0 h-0 border-y-[4px] border-y-transparent border-l-[4px] border-l-black" />
      </div>
    </div>
  );
}

function PriceTag({ text, cls }: { text: string; cls: string }) {
  return (
    <div className={`absolute left-[3px] w-[42px] h-[11px] pl-[3px] text-[10px] leading-[11px] text-white tracking-[-0.4px] ${cls}`}>
      {text}
    </div>
  );
}

export default function App() {
  return (
    <div className="relative w-[1817px] h-[988px] overflow-hidden bg-white flex flex-col font-['Liberation_Sans',Arial,sans-serif]">
      <Logo />
      <div className="h-[20px] flex items-center justify-between shrink-0">
        <span className="text-[12px] text-[#111] whitespace-nowrap tracking-[-0.2px]">ets-Live02 - [EURUSD,H4]</span>
        <div className="flex items-center">
          <svg width="45" height="16" viewBox="0 0 45 16"><path d="M3 7.5h10" stroke="#111" /></svg>
          <svg width="54" height="16" viewBox="0 0 54 16"><path d="M3.5 5.5h7v7h-7zM6 5.5V3.5h7v7h-2.5" fill="none" stroke="#111" /></svg>
          <svg width="25" height="16" viewBox="0 0 25 16"><path d="M3 3l10 10M13 3L3 13" stroke="#111" /></svg>
        </div>
      </div>
      <div className="h-[21px] shrink-0 flex items-center justify-between bg-[#f0f0f0] border-b border-[#a0a0a0] text-[12px] text-[#111]">
        <div className="flex items-center pt-[1px]">
          <span className="w-[28px]">ед</span>
          <span className="w-[59px]">Добави</span>
          <span className="w-[66px]">Графики</span>
          <span className="w-[92px]">Инструменти</span>
          <span className="w-[74px]">Прозорец</span>
          <span>Помощ</span>
        </div>
        <div className="flex items-center gap-[2px] pr-[1px]">
          <div className="w-[18px] h-[18px] border border-white flex items-center justify-center">
            <div className="w-[7px] h-[2px] mt-[5px] bg-[#6a7a8a]" />
          </div>
          <div className="w-[18px] h-[18px] border border-white flex items-center justify-center">
            <svg width="10" height="10" viewBox="0 0 10 10"><path d="M.5 3.5h6v6h-6zM3 3.5V.5h6.5v6h-3" fill="none" stroke="#6a7a8a" /></svg>
          </div>
          <div className="w-[18px] h-[18px] border border-white flex items-center justify-center">
            <svg width="10" height="10" viewBox="0 0 10 10"><path d="M1 1l8 8M9 1l-8 8" stroke="#6a7a8a" strokeWidth="1.8" /></svg>
          </div>
        </div>
      </div>
      <Toolbar1 />
      <Toolbar2 />
      <div className="h-[4px] shrink-0 border-t-2 border-[#909090] bg-white border-b border-b-black" />

      <div className="flex bg-[#dcdcdc] shrink-0">
        <div className="w-[1772px] shrink-0 border-b border-black">
          <div className="relative h-[642px] overflow-hidden">
            <MainChart />
            <div className="absolute left-0 top-[3px] text-[10px] leading-[12px] text-black whitespace-nowrap">85 1.14060 1.13777 1.14028</div>
            <div className="absolute left-[180px] top-[21px] w-[1600px] text-center text-[24.5px] leading-[29px] text-[#ff4d4d]">
              <p>Малко закъснях с публикуването на последните сделки, но все още не е късно да отворите позиция.</p>
              <p>На база на двойното дъно на дневна графика, имаме хубав възходящ импулс и днес корекция обратно до зоната на двойното дъно.</p>
              <p>Графиката на 4 часа ни дава отличен вход. Очаквам минимално движение до последния връх на 1460 и от там до 1500</p>
            </div>
            <div className="absolute left-[1754px] top-[140px] text-[9px] leading-none text-[#ee9aee]">38.2</div>
          </div>
          <Sep />
          <div className="relative h-[17px]">
            <Band items={BAND_1} height={17} />
            <div className="absolute left-0 top-[3px] w-[15px] h-[11px] bg-[#e8e8e8] text-[10px] leading-[11px] text-black">nd</div>
          </div>
          <Sep />
          <div className="relative h-[86px] overflow-hidden">
            <VolumePanel />
            <div className="absolute left-0 top-[3px] text-[10px] leading-[12px] text-black whitespace-nowrap">0 0 0 22072 0 22072</div>
          </div>
          <Sep />
          <div className="relative h-[16px]">
            <Band items={BAND_2} height={16} />
            <div className="absolute left-0 top-[2px] w-[22px] h-[11px] bg-[#e8e8e8] text-[10px] leading-[11px] text-black text-right pr-[1px]">netr</div>
          </div>
          <Sep />
          <div className="h-[70px] overflow-hidden"><WprPanel /></div>
        </div>

        <div className="w-[45px] shrink-0 border-l border-black text-[10px] leading-[12px] text-black tracking-[-0.4px]">
          <div className="relative h-[642px] pt-[7px] overflow-hidden">
            {PRICES.map((t) => (
              <div key={t} className="h-[33px] flex items-start">
                <span className="w-[3px] h-px bg-black mt-[5px]" />
                <span className="ml-[3px]">{t}</span>
              </div>
            ))}
            <PriceTag text="1.15363" cls="top-[350px] bg-[#ff1020]" />
            <PriceTag text="1.15011" cls="top-[391px] bg-[#ff1020]" />
            <PriceTag text="1.14028" cls="top-[505px] bg-black" />
            <PriceTag text="1.13569" cls="top-[558px] bg-[#ff1020]" />
          </div>
          <div className="h-[3px]" />
          <div className="h-[17px] flex items-center pl-[5px]">0</div>
          <div className="h-[3px]" />
          <div className="h-[86px] flex flex-col justify-between pl-[5px]">
            <span>92334</span>
            <span className="mb-[2px]">0</span>
          </div>
          <div className="h-[3px]" />
          <div className="h-[16px] flex items-center pl-[5px]">0</div>
          <div className="h-[3px]" />
          <div className="relative h-[71px] overflow-hidden">
            <span className="absolute left-[5px] top-[1px]">0</span>
            <span className="absolute left-[3px] top-[9px] w-[15px] h-[11px] bg-[#ff8c28] text-white pl-[1px] leading-[11px]">-20</span>
            <span className="absolute left-[3px] top-[52px] w-[15px] h-[5px] overflow-hidden bg-[#ff8c28] text-white pl-[1px] leading-[7px]">-80</span>
            <span className="absolute left-[5px] top-[57px] bg-[#dcdcdc]">-100</span>
          </div>
        </div>
      </div>

      <div className="h-[22px] shrink-0 bg-[#dcdcdc] flex overflow-hidden text-[10px] leading-[12px] text-black">
        <div className="w-[30px] shrink-0 flex justify-end pt-[3px] pr-[9px] overflow-hidden">
          <span className="whitespace-nowrap">04:00</span>
        </div>
        {DATES.map((d) => (
          <div key={d} className="w-[64px] shrink-0 flex flex-col">
            <span className="w-px h-[3px] bg-black" />
            <span className="whitespace-nowrap">{d}</span>
          </div>
        ))}
      </div>
      <Tabs />
    </div>
  );
}
